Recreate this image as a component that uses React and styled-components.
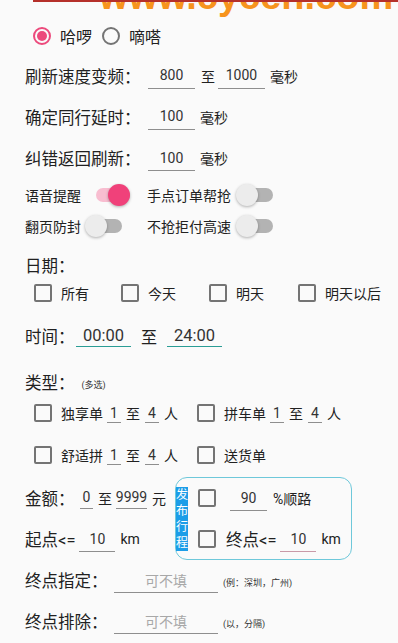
import styled, { createGlobalStyle } from "styled-components";

const GlobalStyle = createGlobalStyle`
  html, body { margin: 0; padding: 0; background: #fafafa; }
  body { font-family: Roboto, "Noto Sans CJK SC", sans-serif; color: #212121; }
  * { box-sizing: border-box; }
`;

const Page = styled.div`
  position: relative;
  width: 398px;
  height: 643px;
  overflow: hidden;
  padding: 17px 0 0 25px;
  background: #fafafa;
`;

const Watermark = styled.div`
  position: absolute;
  top: 0;
  left: 33px;
  right: 0;
  height: 20px;
  overflow: hidden;
  border-top: 2px solid #b5302a;
  pointer-events: none;
`;

const WatermarkText = styled.div`
  position: absolute;
  left: 66px;
  top: -25px;
  font-family: "Liberation Sans", Arial, sans-serif;
  font-weight: 700;
  font-size: 38px;
  line-height: 38px;
  color: #f7941d;
  white-space: nowrap;
`;

const Row = styled.div`
  display: flex;
  align-items: center;
  height: ${({ h }) => h}px;
  margin-top: ${({ mt = 0 }) => mt}px;
  padding-left: ${({ pl = 0 }) => pl}px;
`;

const Label = styled.span`
  font-size: 16.5px;
  white-space: nowrap;
  width: ${({ w }) => (w ? `${w}px` : "auto")};
  margin-left: ${({ ml = 0 }) => ml}px;
  flex-shrink: 0;
`;

const Text = styled.span`
  font-size: ${({ size = 14 }) => size}px;
  white-space: nowrap;
  margin-left: ${({ ml = 0 }) => ml}px;
  margin-right: ${({ mr = 0 }) => mr}px;
`;

const Small = styled.span`
  font-size: 9px;
  color: #333;
  margin-left: ${({ ml = 0 }) => ml}px;
  margin-top: 4px;
  white-space: nowrap;
`;

const Input = styled.div`
  width: ${({ w }) => w}px;
  height: ${({ h = 26 }) => h}px;
  margin-left: ${({ ml = 0 }) => ml}px;
  border-bottom: 1px solid ${({ line = "#8e8e8e" }) => line};
  display: flex;
  align-items: center;
  justify-content: center;
  font-size: ${({ size = 14 }) => size}px;
  color: ${({ muted }) => (muted ? "#a8a8a8" : "#333")};
  flex-shrink: 0;
`;

const RadioCircle = styled.span`
  width: 18px;
  height: 18px;
  border-radius: 50%;
  border: 2px solid ${({ on }) => (on ? "#ec4a7c" : "#747474")};
  display: flex;
  align-items: center;
  justify-content: center;
  margin-left: ${({ ml = 0 }) => ml}px;
  flex-shrink: 0;
  &::after {
    content: "";
    width: 10px;
    height: 10px;
    border-radius: 50%;
    background: ${({ on }) => (on ? "#ec4a7c" : "transparent")};
  }
`;

const Box = styled.span`
  width: 18px;
  height: 18px;
  border: 2px solid #747474;
  border-radius: 2px;
  flex-shrink: 0;
  margin-left: ${({ ml = 0 }) => ml}px;
`;

const SwitchWrap = styled.span`
  position: relative;
  width: 37px;
  height: 22px;
  margin-left: ${({ ml = 0 }) => ml}px;
  flex-shrink: 0;
`;

const Track = styled.span`
  position: absolute;
  left: 3px;
  right: 0;
  top: 4px;
  height: 14px;
  border-radius: 7px;
  background: ${({ on }) => (on ? "#f8bdd0" : "#b3b3b3")};
`;

const Thumb = styled.span`
  position: absolute;
  top: 0;
  left: ${({ on }) => (on ? 15 : 0)}px;
  width: 22px;
  height: 22px;
  border-radius: 50%;
  background: ${({ on }) => (on ? "#f0417a" : "#ececec")};
  box-shadow: 0 1px 3px rgba(0, 0, 0, 0.3);
`;

const SwitchGrid = styled.div`
  display: grid;
  grid-template-columns: 122px auto;
`;

const Cell = styled.div`
  display: flex;
  align-items: center;
  height: ${({ h }) => h}px;
`;

const CheckItem = styled.div`
  display: flex;
  align-items: center;
  width: ${({ w }) => (w ? `${w}px` : "auto")};
  flex-shrink: 0;
`;

const Split = styled.div`
  display: flex;
  margin-top: 8px;
`;

const LeftCol = styled.div`
  width: 150px;
  display: flex;
  flex-direction: column;
`;

const Panel = styled.div`
  width: 177px;
  height: 83px;
  border: 1px solid #6ec8da;
  border-radius: 12px;
  display: flex;
  align-items: center;
`;

const Tag = styled.div`
  width: 12px;
  height: 64px;
  background: #1c9de8;
  color: #fff;
  font-size: 12px;
  line-height: 16px;
  text-align: center;
  flex-shrink: 0;
`;

const PanelRows = styled.div`
  display: flex;
  flex-direction: column;
`;

const Radio = ({ on, label, ml }) => (
  <>
    <RadioCircle on={on} ml={ml} />
    <Text size={16} ml={9}>{label}</Text>
  </>
);

const Switch = ({ on, ml }) => (
  <SwitchWrap ml={ml}>
    <Track on={on} />
    <Thumb on={on} />
  </SwitchWrap>
);

const Check = ({ label, w, size = 14 }) => (
  <CheckItem w={w}>
    <Box />
    <Text size={size} ml={9}>{label}</Text>
  </CheckItem>
);

const TypeGroup = ({ label }) => (
  <CheckItem w={163}>
    <Box />
    <Text ml={9}>{label}</Text>
    <Input w={14} h={20} ml={4}>1</Input>
    <Text ml={5} mr={5}>至</Text>
    <Input w={14} h={20}>4</Input>
    <Text ml={5}>人</Text>
  </CheckItem>
);

export default function App() {
  return (
    <>
      <GlobalStyle />
      <Page>
        <Watermark>
          <WatermarkText>www.cycen.com</WatermarkText>
        </Watermark>

        <Row h={38}>
          <Radio on label="哈啰" ml={8} />
          <Radio label="嘀嗒" ml={10} />
        </Row>

        <Row h={41}>
          <Label w={123}>刷新速度变频：</Label>
          <Input w={47}>800</Input>
          <Text ml={6} mr={3}>至</Text>
          <Input w={47}>1000</Input>
          <Text ml={5}>毫秒</Text>
        </Row>
        <Row h={41}>
          <Label w={123}>确定同行延时：</Label>
          <Input w={47}>100</Input>
          <Text ml={5}>毫秒</Text>
        </Row>
        <Row h={42}>
          <Label w={123}>纠错返回刷新：</Label>
          <Input w={47}>100</Input>
          <Text ml={5}>毫秒</Text>
        </Row>

        <SwitchGrid>
          <Cell h={32}>
            <Text>语音提醒</Text>
            <Switch on ml={12} />
          </Cell>
          <Cell h={32}>
            <Text>手点订单帮抢</Text>
            <Switch ml={5} />
          </Cell>
          <Cell h={30}>
            <Text>翻页防封</Text>
            <Switch ml={4} />
          </Cell>
          <Cell h={30}>
            <Text>不抢拒付高速</Text>
            <Switch ml={5} />
          </Cell>
        </SwitchGrid>

        <Row h={28} mt={10}>
          <Label>日期：</Label>
        </Row>
        <Row h={28} pl={9}>
          <Check label="所有" w={87} />
          <Check label="今天" w={88} />
          <Check label="明天" w={89} />
          <Check label="明天以后" />
        </Row>

        <Row h={58}>
          <Label w={51}>时间：</Label>
          <Input w={55} h={22} size={16.5} line="#2a9d95">00:00</Input>
          <Text size={16} ml={10} mr={10}>至</Text>
          <Input w={55} h={22} size={16.5} line="#2a9d95">24:00</Input>
        </Row>

        <Row h={34}>
          <Label>类型：</Label>
          <Small ml={7}>(多选)</Small>
        </Row>
        <Row h={28} pl={9}>
          <TypeGroup label="独享单" />
          <TypeGroup label="拼车单" />
        </Row>
        <Row h={28} mt={14} pl={9}>
          <TypeGroup label="舒适拼" />
          <Check label="送货单" />
        </Row>

        <Split>
          <LeftCol>
            <Row h={41}>
              <Label w={55}>金额：</Label>
              <Input w={13} h={22}>0</Input>
              <Text ml={5} mr={4}>至</Text>
              <Input w={31} h={22}>9999</Input>
              <Text ml={5}>元</Text>
            </Row>
            <Row h={42}>
              <Label>起点&lt;=</Label>
              <Input w={36} ml={4}>10</Input>
              <Text ml={5}>km</Text>
            </Row>
          </LeftCol>
          <Panel>
            <Tag>发布行程</Tag>
            <PanelRows>
              <Row h={41}>
                <Box ml={10} />
                <Input w={37} ml={14}>90</Input>
                <Text ml={6}>%顺路</Text>
              </Row>
              <Row h={41}>
                <Box ml={10} />
                <Label ml={10}>终点&lt;=</Label>
                <Input w={36} ml={4} line="#c99aa8">10</Input>
                <Text ml={5}>km</Text>
              </Row>
            </PanelRows>
          </Panel>
        </Split>

        <Row h={40}>
          <Label w={89}>终点指定：</Label>
          <Input w={104} muted>可不填</Input>
          <Small ml={5}>(例：深圳，广州)</Small>
        </Row>
        <Row h={42}>
          <Label w={89}>终点排除：</Label>
          <Input w={104} muted>可不填</Input>
          <Small ml={5}>(以，分隔)</Small>
        </Row>
      </Page>
    </>
  );
}
